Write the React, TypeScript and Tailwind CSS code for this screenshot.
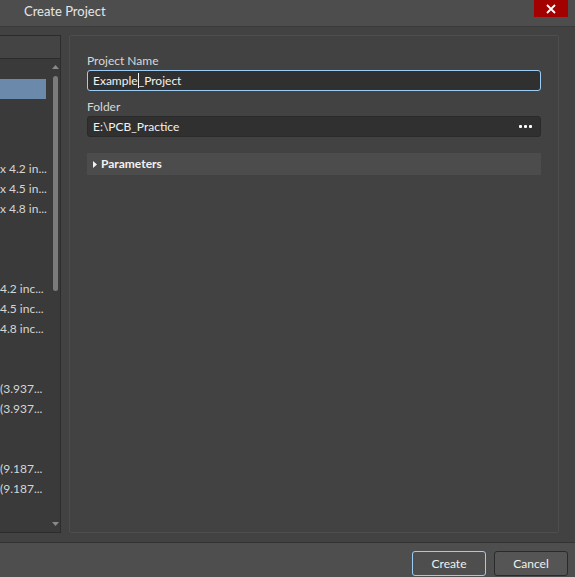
import React from "react";

const rows: (string | null)[] = [
  null, null, null, null,
  "x 4.2 in...", "x 4.5 in...", "x 4.8 in...",
  null, null, null,
  "4.2 inc...", "4.5 inc...", "4.8 inc...",
  null, null,
  "(3.937...", "(3.937...",
  null, null,
  "(9.187...", "(9.187...",
  null,
];

export default function App() {
  return (
    <div
      className="w-[575px] h-[577px] flex flex-col bg-[#424242] overflow-hidden text-[12px] text-[#dcdcdc]"
      style={{ fontFamily: '"Segoe UI", Lato, "Noto Sans", sans-serif' }}
    >
      {/* Title bar */}
      <div className="h-[27px] shrink-0 flex items-start bg-[#4d4d4d] border-b border-[#3a3a3a]">
        <div className="pl-[24px] pt-[2px] text-[13px] text-[#e6e6e6]">Create Project</div>
        <div className="ml-auto mr-[7px] w-[34px] h-[17px] bg-[#a30000] flex items-center justify-center">
          <svg width="10" height="10" viewBox="0 0 10 10">
            <path d="M1 1 L9 9 M9 1 L1 9" stroke="#fff" strokeWidth="1.8" />
          </svg>
        </div>
      </div>

      {/* Body */}
      <div className="flex-1 flex pt-[8px] pr-[16px] pb-[9px] gap-[8px] min-h-0">
        {/* Left list panel (clipped) */}
        <div className="w-[61px] shrink-0 flex flex-col bg-[#3a3a3a] border-t border-r border-b border-[#2c2c2c]">
          <div className="h-[23px] shrink-0 bg-[#444444] border-b border-[#2c2c2c]" />
          <div className="flex-1 flex min-h-0">
            <div className="w-[50px] flex flex-col pt-[20px] overflow-hidden">
              {rows.map((t, i) => (
                <div
                  key={i}
                  className={`h-[20px] shrink-0 flex items-center whitespace-nowrap ${
                    i === 0 ? "bg-[#6b8aab] mr-[4px]" : ""
                  }`}
                >
                  {t && <span className="text-[#d6d6d6]">{t}</span>}
                </div>
              ))}
            </div>
            <div className="w-[10px] flex flex-col items-center pt-[6px] pb-[6px]">
              <svg width="7" height="4" viewBox="0 0 7 4">
                <path d="M0 4 L3.5 0 L7 4 Z" fill="#8a8a8a" />
              </svg>
              <div className="w-[5px] h-[215px] mt-[7px] rounded-[3px] bg-[#7b7b7b]" />
              <div className="flex-1" />
              <svg width="7" height="4" viewBox="0 0 7 4">
                <path d="M0 0 L7 0 L3.5 4 Z" fill="#8a8a8a" />
              </svg>
            </div>
          </div>
        </div>

        {/* Right form panel */}
        <div className="flex-1 flex flex-col border border-[#4d4d4d] rounded-[2px] px-[17px] pt-[16px]">
          <div className="h-[17px] flex items-center text-[#d8d8d8]">Project Name</div>
          <div className="mt-[1px] h-[21px] flex items-center px-[5px] bg-[#303030] border border-[#9ccbf3] rounded-[3px] text-[#f2f2f2]">
            <span>Example</span>
            <span className="w-px h-[15px] bg-[#f2f2f2]" />
            <span>_Project</span>
          </div>
          <div className="mt-[7px] h-[18px] flex items-center text-[#d8d8d8]">Folder</div>
          <div className="h-[21px] flex items-center px-[5px] bg-[#303030] border border-[#2a2a2a] rounded-[3px] text-[#f2f2f2]">
            <span>E:\PCB_Practice</span>
            <div className="ml-auto mr-[3px] flex gap-[2px]">
              <span className="w-[3px] h-[3px] bg-white rounded-[1px]" />
              <span className="w-[3px] h-[3px] bg-white rounded-[1px]" />
              <span className="w-[3px] h-[3px] bg-white rounded-[1px]" />
            </div>
          </div>
          <div className="mt-[16px] h-[22px] flex items-center bg-[#4c4c4c] pl-[6px] text-[#f2f2f2] font-bold">
            <svg width="4" height="7" viewBox="0 0 4 7" className="mr-[4px]">
              <path d="M0 0 L4 3.5 L0 7 Z" fill="#f2f2f2" />
            </svg>
            <span>Parameters</span>
          </div>
        </div>
      </div>

      {/* Footer */}
      <div className="h-[35px] shrink-0 bg-[#4e4e4e] border-t border-[#333333] flex items-start justify-end gap-[8px] pt-[8px] pr-[7px]">
        <button className="w-[74px] h-[25px] rounded-[3px] border border-[#9ccbf3] bg-[#4e4e4e] text-[#f0f0f0] text-[12px]">
          Create
        </button>
        <button className="w-[74px] h-[25px] rounded-[3px] border border-[#2a2a2a] bg-[#555555] text-[#f0f0f0] text-[12px]">
          Cancel
        </button>
      </div>
    </div>
  );
}
